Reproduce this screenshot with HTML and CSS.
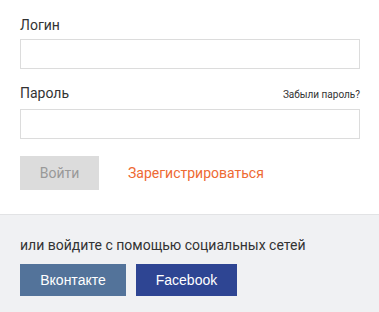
FILE: index.html
```html
<!DOCTYPE html>
<html lang="ru">
<head>
<meta charset="utf-8">
<link rel="stylesheet" href="styles.css">
</head>
<body>
<div class="form">
  <div class="label-row"><span class="label">Логин</span></div>
  <input class="field" type="text">
  <div class="label-row second"><span class="label">Пароль</span><a class="forgot">Забыли пароль?</a></div>
  <input class="field" type="password">
  <div class="actions">
    <button class="login">Войти</button>
    <a class="register">Зарегистрироваться</a>
  </div>
</div>
<div class="social">
  <div class="social-text">или войдите с помощью социальных сетей</div>
  <div class="social-buttons">
    <button class="btn vk">Вконтакте</button>
    <button class="btn fb">Facebook</button>
  </div>
</div>
</body>
</html>
```
FILE: styles.css
```css
html, body { margin: 0; padding: 0; background: #fff; }
body { font-family: Roboto, "Noto Sans", sans-serif; font-size: 14px; color: #333; width: 379px; }
.form { padding: 15px 19px 24px 20px; }
.label-row { display: flex; justify-content: space-between; align-items: baseline; line-height: 20px; margin-bottom: 4px; }
.label-row.second { margin-top: 14px; }
.label { font-size: 14px; color: #333; }
.forgot { font-size: 10px; color: #333; }
.field { display: block; box-sizing: border-box; width: 340px; height: 30px; margin: 0; border: 1px solid #dcdcdc; background: #fff; padding: 0 8px; outline: none; }
.actions { display: flex; align-items: center; margin-top: 17px; }
.login { height: 34px; width: 79px; border: 0; background: #dcdcdc; color: #999; font-family: inherit; font-size: 14px; padding: 0; }
.register { margin-left: 29px; color: #ee6a33; font-size: 14px; }
.social { background: #f0f1f3; border-top: 1px solid #e2e3e5; padding: 20px 20px 18px; }
.social-text { line-height: 20px; color: #333; }
.social-buttons { display: flex; gap: 10px; margin-top: 9px; }
.btn { height: 32px; border: 0; color: #fff; font-family: "Liberation Sans", Arial, sans-serif; font-size: 14px; padding: 0; }
.vk { background: #53739a; width: 106px; }
.fb { background: #2e4593; width: 101px; }
```
